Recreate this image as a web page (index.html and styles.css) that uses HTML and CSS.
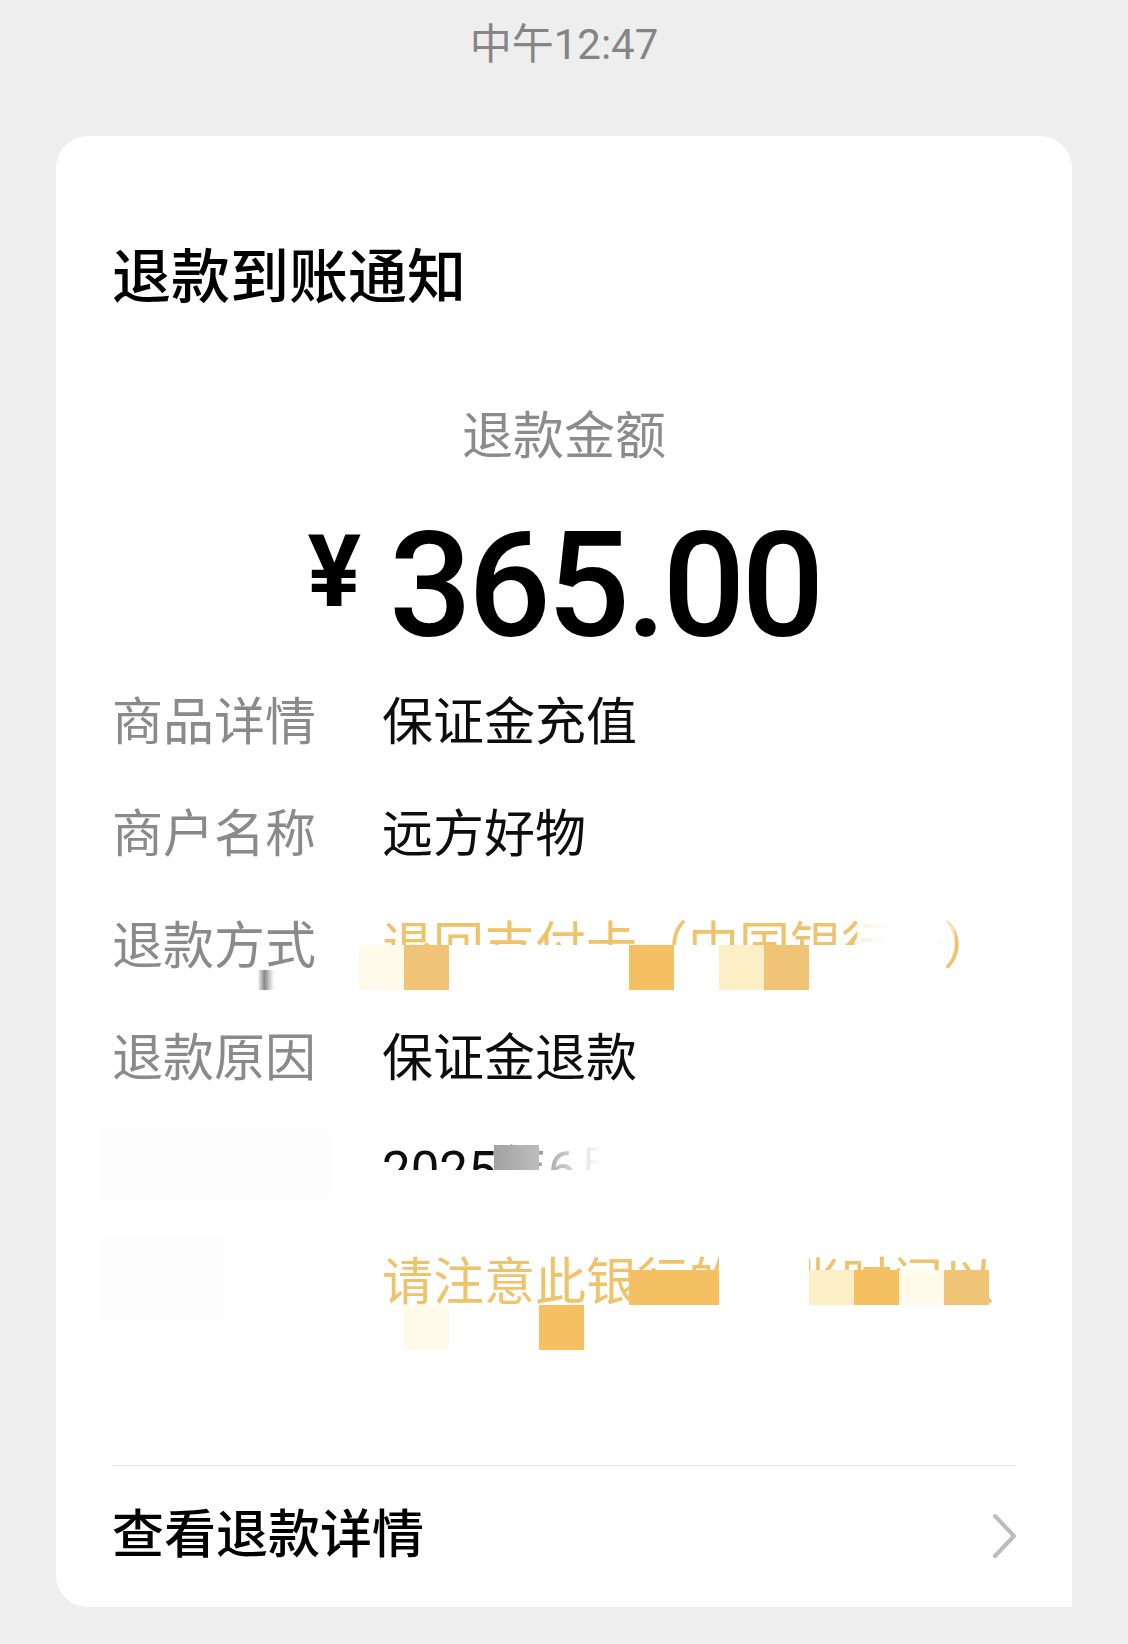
FILE: index.html
```html
<!DOCTYPE html>
<html lang="zh-CN">

<head>
    <meta charset="UTF-8">
    <meta name="viewport" content="width=device-width, initial-scale=1.0">
    <title>退款到账通知</title>
    <link rel="stylesheet" href="styles.css">
</head>

<body>
    <div class="time">中午12:47</div>

    <div class="card">
        <h2 class="card-title">退款到账通知</h2>
        <div class="amount-label">退款金额</div>
        <div class="amount">
            <span class="yen">¥</span>
            <span class="num">365.00</span>
        </div>

        <ul class="info">
            <li>
                <span class="label">商品详情</span>
                <span class="value">保证金充值</span>
            </li>
            <li>
                <span class="label">商户名称</span>
                <span class="value">远方好物</span>
            </li>
            <li>
                <span class="label">退款方式</span>
                <span class="value accent">退回支付卡（中国银行卡）
                    <span class="blot b-way-top"></span>
                    <span class="blot b-way-left"></span>
                    <span class="smear s-way"></span>
                    <span class="mosaic m-way"><i class="p"></i><i class="g2"></i><i class="w"></i><i class="w"></i><i class="w"></i><i class="w"></i><i class="g"></i><i class="w"></i><i class="l"></i><i class="g2"></i><i class="w"></i><i class="w"></i><i class="w"></i></span>
                </span>
            </li>
            <li>
                <span class="label">退款原因</span>
                <span class="value">保证金退款</span>
            </li>
            <li>
                <span class="label ghost g-time">到账时间</span>
                <span class="value">2025年6月18日 12:46
                    <span class="blot b-time-low"></span>
                    <span class="blot b-time-right"></span>
                    <span class="smear s-time"></span>
                </span>
            </li>
            <li>
                <span class="label ghost g-note">温馨提示</span>
                <span class="value accent">请注意此银行的到账时间以银行为准
                    <span class="blot b-note-top"></span>
                    <span class="blot b-note-line2"></span>
                    <span class="mosaic m-note1"><i class="g"></i><i class="g"></i><i class="w"></i><i class="w"></i><i class="l"></i><i class="g"></i><i class="p"></i><i class="g2"></i></span>
                    <span class="mosaic m-note2"><i class="w"></i><i class="p"></i><i class="w"></i><i class="w"></i><i class="g"></i></span>
                </span>
            </li>
        </ul>

        <div class="detail-link">
            <span>查看退款详情</span>
            <svg class="arrow" width="26" height="46" viewBox="0 0 26 46">
                <polyline points="3,3 22,23 3,43" fill="none" stroke="#bcbcbc" stroke-width="4" stroke-linecap="round" stroke-linejoin="round" />
            </svg>
        </div>
    </div>
</body>

</html>
```

FILE: styles.css
```css
* {
    padding: 0;
    margin: 0;
    box-sizing: border-box;
}

body {
    background: #eeeeee;
    font-family: Roboto, "Noto Sans CJK SC", sans-serif;
    color: #0d0d0d;
}

.time {
    padding-top: 20px;
    font-size: 42px;
    line-height: 50px;
    text-align: center;
    color: #858585;
}

.card {
    margin: 66px 56px 0;
    padding: 107px 56px 40px;
    background: #fff;
    border-radius: 32px 32px 0 32px;
}

.card-title {
    font-size: 59px;
    line-height: 70px;
    font-weight: 500;
    color: #000;
}

.amount-label {
    margin-top: 94px;
    font-size: 51px;
    line-height: 60px;
    text-align: center;
    color: #8b8b8b;
}

/* 金额 */
.amount {
    margin-top: 47px;
    display: flex;
    justify-content: center;
    align-items: flex-start;
    color: #000;
}

.amount .yen {
    margin-top: 8px;
    margin-right: 28px;
    font-family: Roboto, sans-serif;
    font-size: 100px;
    line-height: 100px;
    font-weight: 700;
}

.amount .num {
    font-family: Roboto, sans-serif;
    font-size: 146px;
    line-height: 146px;
    font-weight: 500;
    letter-spacing: -4px;
}

/* 明细 */
.info {
    margin-top: 32px;
    list-style-type: none;
}

.info li {
    display: flex;
    font-size: 51px;
    line-height: 62px;
}

.info li + li {
    margin-top: 50px;
}

.info .label {
    position: relative;
    flex: none;
    width: 270px;
    color: #8a8a8a;
}

.info .value {
    position: relative;
    flex: 1;
}

.info .accent {
    color: #f0c26a;
}

/* 被模糊掉的标签 */
.info .ghost {
    z-index: 0;
    color: transparent;
}

.info .ghost::before {
    content: "";
    position: absolute;
    background: #fdfdfd;
    box-shadow: 0 0 8px #fdfdfd;
    z-index: -1;
}

.g-time::before {
    left: -12px;
    top: -13px;
    width: 230px;
    height: 73px;
}

.g-note::before {
    left: -12px;
    top: -15px;
    width: 125px;
    height: 83px;
}

/* 打码区域 */
.blot {
    position: absolute;
    background: #fff;
}

.smear {
    position: absolute;
}

.mosaic {
    position: absolute;
    display: flex;
    height: 45px;
}

.mosaic i {
    flex: none;
    width: 45px;
}

.mosaic .w { background: #fff; }
.mosaic .p { background: #fffaea; }
.mosaic .l { background: #fcefc8; }
.mosaic .g { background: #f5c062; }
.mosaic .g2 { background: #f0c476; }

.b-way-top {
    left: 475px;
    top: 0;
    width: 98px;
    height: 29px;
    background: linear-gradient(to right, rgba(255, 255, 255, 0.7), #fff 30%, #fff 80%, rgba(255, 255, 255, 0.4));
}

.b-way-left {
    left: -66px;
    top: 4px;
    width: 43px;
    height: 70px;
}

.s-way {
    left: -124px;
    top: 54px;
    width: 16px;
    height: 20px;
    background: linear-gradient(to right, #f4f4f4, #8a8a8a 40%, #fff);
}

.m-way {
    left: -23px;
    top: 29px;
}

.b-time-low {
    left: -42px;
    top: 30px;
    width: 660px;
    height: 50px;
}

.b-time-right {
    left: 157px;
    top: 0;
    width: 420px;
    height: 40px;
    background: linear-gradient(to right, rgba(255, 255, 255, 0.6), #fff 15%);
}

.s-time {
    left: 112px;
    top: 5px;
    width: 45px;
    height: 25px;
    background: linear-gradient(to right, #a2a2a2, #bdbdbd);
}

.m-note1 {
    left: 247px;
    top: 18px;
    height: 35px;
}

.b-note-top {
    left: 337px;
    top: 0;
    width: 90px;
    height: 20px;
}

.b-note-line2 {
    left: -42px;
    top: 53px;
    width: 680px;
    height: 80px;
}

.m-note2 {
    left: -23px;
    top: 53px;
}

/* 底部链接 */
.detail-link {
    display: flex;
    justify-content: space-between;
    align-items: center;
    margin-top: 89px;
    padding-top: 39px;
    border-top: 1px solid #e4e4e4;
    font-size: 52px;
    line-height: 62px;
    font-weight: 500;
    color: #000;
}

.detail-link .arrow {
    margin-right: -2px;
}
```
